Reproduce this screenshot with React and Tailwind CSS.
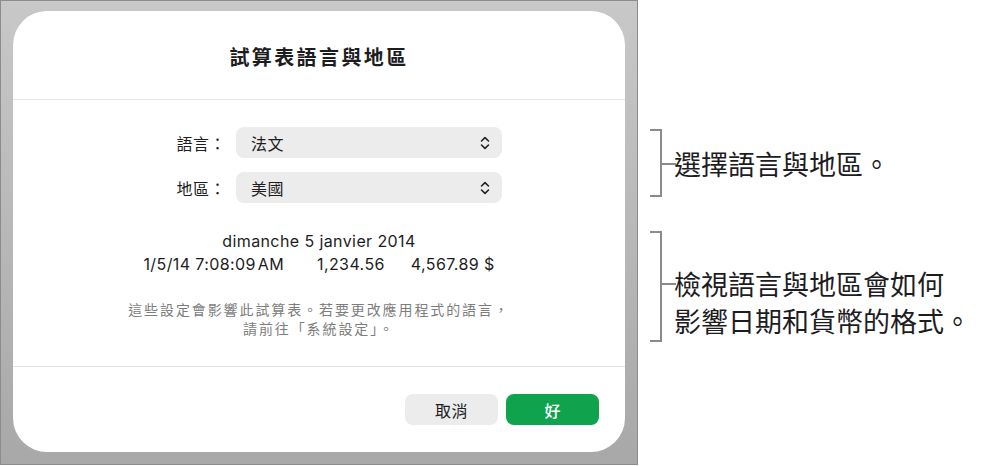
import React from "react";

const CJK = { fontFamily: '"Noto Sans CJK TC", "Noto Sans", sans-serif' };
const LAT = { fontFamily: 'Inter, "Noto Sans CJK TC", sans-serif' };

function Chevrons() {
  return (
    <svg width="10" height="14" viewBox="0 0 10 14" fill="none" stroke="#222" strokeWidth="1.6" strokeLinecap="round" strokeLinejoin="round">
      <path d="M1.5 5 L5 1.6 L8.5 5" />
      <path d="M1.5 9 L5 12.4 L8.5 9" />
    </svg>
  );
}

function Popup({ label, value }) {
  return (
    <div className="flex items-center">
      <div className="w-[50px] text-right text-[16px] tracking-[0.5px] text-[#1d1d1f]" style={CJK}>{label}</div>
      <div className="ml-[10px] flex h-[31px] w-[266px] items-center justify-between rounded-[8px] bg-[#ececec] pl-[15px] pr-[12px]">
        <span className="text-[16px] tracking-[0.5px] text-[#1d1d1f]" style={CJK}>{value}</span>
        <Chevrons />
      </div>
    </div>
  );
}

function Bracket({ height, tick }) {
  return (
    <div className="relative w-[26px]" style={{ height }}>
      <div className="absolute left-[10px] top-0 h-[2px] w-[12px] bg-[#8a8a8a]" />
      <div className="absolute left-[20px] top-0 w-[2px] bg-[#8a8a8a]" style={{ height }} />
      <div className="absolute bottom-0 left-[10px] h-[2px] w-[12px] bg-[#8a8a8a]" />
      <div className="absolute left-[22px] h-[2px] w-[14px] bg-[#8a8a8a]" style={{ top: tick }} />
    </div>
  );
}

export default function App() {
  return (
    <div className="flex h-[466px] w-[982px] bg-white">
      <div className="h-[465px] w-[638px] shrink-0 border border-[#8c8c8c] bg-gradient-to-b from-[#c8c8c8] to-[#a8a8a8] pl-[12px] pt-[10px]">
        <div className="flex h-[441px] w-[612px] flex-col rounded-[34px] bg-white">
          <div className="flex h-[88px] items-start justify-center pt-[33px]">
            <span className="text-[20px] font-bold leading-[26px] tracking-[2.4px] text-[#1d1d1f]" style={CJK}>試算表語言與地區</span>
          </div>
          <div className="h-px bg-[#e3e3e3]" />
          <div className="flex flex-col gap-[14px] pl-[163px] pt-[27px]">
            <Popup label="語言：" value="法文" />
            <Popup label="地區：" value="美國" />
          </div>
          <div className="mt-[27px] flex flex-col items-center text-[16px] leading-[23px] tracking-[0.4px] text-[#1d1d1f]" style={LAT}>
            <div>dimanche 5 janvier 2014</div>
            <div className="flex">
              <span>1/5/14 7:08:09&#8202;AM</span>
              <span className="ml-[33px]">1,234.56</span>
              <span className="ml-[26px]">4,567.89 $</span>
            </div>
          </div>
          <div className="mt-[24px] flex flex-col items-center text-[14px] leading-[19px] tracking-[1.9px] text-[#7d7d7d]" style={CJK}>
            <div>這些設定會影響此試算表。若要更改應用程式的語言，</div>
            <div>請前往「系統設定」。</div>
          </div>
          <div className="mt-[28px] h-px bg-[#e3e3e3]" />
          <div className="flex justify-end gap-[8px] pr-[26px] pt-[27px]">
            <div className="flex h-[31px] w-[93px] items-center justify-center rounded-[8px] bg-[#ececec] text-[16px] tracking-[0.5px] text-[#1d1d1f]" style={CJK}>取消</div>
            <div className="flex h-[31px] w-[93px] items-center justify-center rounded-[8px] bg-[#0fa34e] text-[16px] font-medium text-white" style={CJK}>好</div>
          </div>
        </div>
      </div>
      <div className="flex flex-col pl-[2px]">
        <div className="mt-[129px] flex items-start">
          <Bracket height={68} tick={34} />
          <div className="ml-[8px] mt-[17px] text-[27px] leading-[36px] text-[#1d1d1f]" style={CJK}>選擇語言與地區。</div>
        </div>
        <div className="mt-[34px] flex items-start">
          <Bracket height={111} tick={52} />
          <div className="ml-[8px] mt-[34px] text-[27px] leading-[37px] text-[#1d1d1f]" style={CJK}>
            <div>檢視語言與地區會如何</div>
            <div>影響日期和貨幣的格式。</div>
          </div>
        </div>
      </div>
    </div>
  );
}
